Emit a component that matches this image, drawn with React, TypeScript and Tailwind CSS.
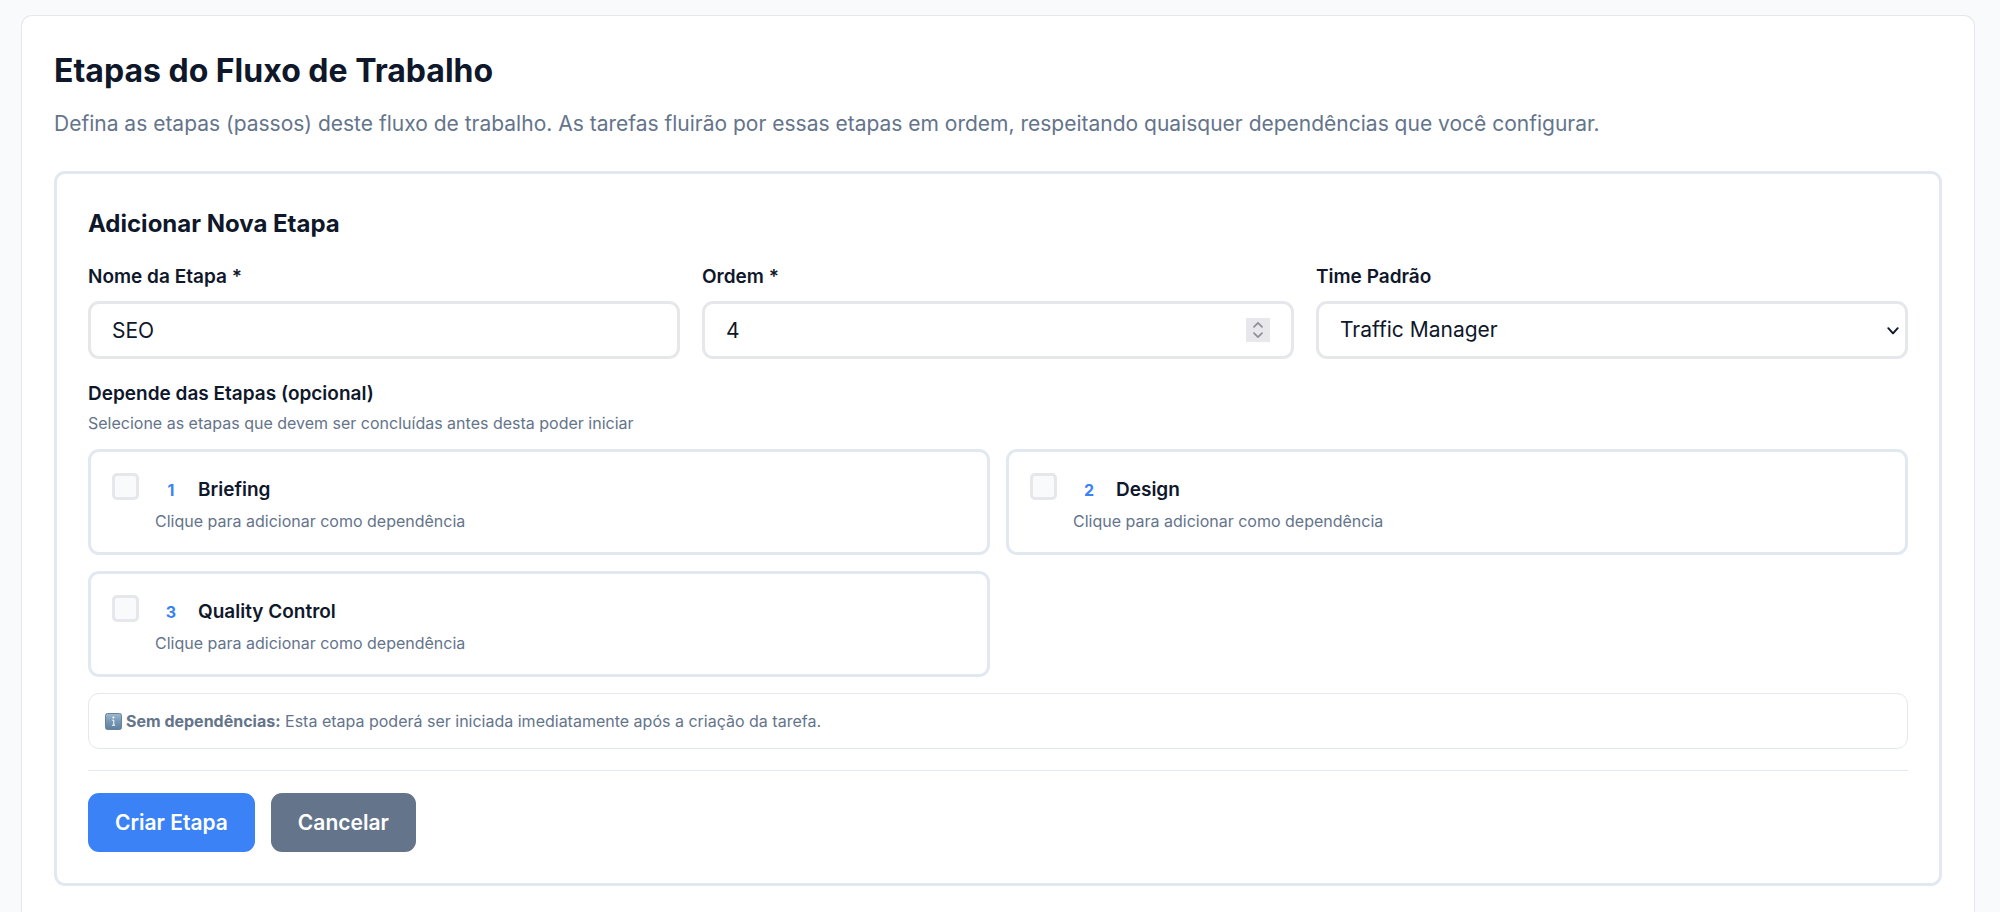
import { useState } from "react";
import type { ReactNode } from "react";

interface Step {
  id: number;
  name: string;
}

const STEPS: Step[] = [
  { id: 1, name: "Briefing" },
  { id: 2, name: "Design" },
  { id: 3, name: "Quality Control" },
];

const TEAMS = ["Traffic Manager", "Design", "Copywriting"];

const LABEL_CLASS = "block text-[19px] leading-[30px] font-semibold";
const FIELD_CLASS =
  "h-[58px] w-full rounded-[11px] border-3 border-gray-200 bg-white px-[21px] text-[21px] outline-none focus:border-[#3b82f6]";

function Field({ id, label, children }: { id: string; label: string; children: ReactNode }) {
  return (
    <div>
      <label className={LABEL_CLASS} htmlFor={id}>
        {label}
      </label>
      <div className="relative mt-[9px]">{children}</div>
    </div>
  );
}

function StepperIcon() {
  return (
    <svg
      aria-hidden="true"
      className="pointer-events-none absolute top-[17px] right-6 h-6 w-6"
      fill="none"
      viewBox="0 0 24 24"
    >
      <rect fill="#e8e8ec" height="24" width="24" />
      <path
        d="M8 8.8 12 4.8 16 8.8M8 15.2 12 19.2 16 15.2"
        stroke="#8e8d99"
        strokeLinecap="round"
        strokeLinejoin="round"
        strokeWidth="1.7"
      />
    </svg>
  );
}

function ChevronIcon() {
  return (
    <svg
      aria-hidden="true"
      className="pointer-events-none absolute top-[25px] right-[9px] h-[10px] w-3"
      fill="none"
      viewBox="0 0 12 10"
    >
      <path
        d="M1.3 2.2 6 7.4 10.7 2.2"
        stroke="#0f172a"
        strokeLinecap="round"
        strokeLinejoin="round"
        strokeWidth="1.9"
      />
    </svg>
  );
}

function InfoIcon() {
  return (
    <svg aria-hidden="true" className="h-[17px] w-[17px] shrink-0" viewBox="0 0 17 17">
      <defs>
        <linearGradient id="info-face" x1="0" x2="0" y1="0" y2="1">
          <stop offset="0" stopColor="#9dbad0" />
          <stop offset="0.5" stopColor="#7897b3" />
          <stop offset="1" stopColor="#5d7f9f" />
        </linearGradient>
      </defs>
      <rect fill="url(#info-face)" height="16" rx="2" stroke="#66839d" width="16" x="0.5" y="0.5" />
      <circle cx="8.4" cy="4.6" fill="#fff" r="1" />
      <path d="M7.2 7.2h1.6v4.8M6.9 12.2h3.3" fill="none" stroke="#fff" strokeWidth="1" />
    </svg>
  );
}

function DependencyOption({
  step,
  checked,
  onToggle,
}: {
  step: Step;
  checked: boolean;
  onToggle: () => void;
}) {
  return (
    <label className="flex cursor-pointer gap-4 rounded-[11px] border-3 border-slate-200 p-[21px]">
      <input
        checked={checked}
        className="h-[27px] w-[27px] shrink-0 appearance-none rounded-[5px] border-3 border-gray-200 bg-slate-50 checked:border-[#3b82f6] checked:bg-[#3b82f6]"
        onChange={onToggle}
        type="checkbox"
      />
      <span className="block">
        <span className="flex h-[34px] items-center gap-[11px]">
          <span className="flex w-8 justify-center text-[16px] font-bold text-[#3b82f6]">
            {step.id}
          </span>
          <span className="text-[19px] leading-[30px] font-semibold">{step.name}</span>
        </span>
        <span className="mt-1 block text-[16px] leading-[20px] text-[#64748b]">
          {checked ? "Dependência adicionada" : "Clique para adicionar como dependência"}
        </span>
      </span>
    </label>
  );
}

export default function App() {
  const [name, setName] = useState("SEO");
  const [order, setOrder] = useState("4");
  const [team, setTeam] = useState(TEAMS[0]);
  const [dependencies, setDependencies] = useState<number[]>([]);

  const toggle = (id: number) => {
    setDependencies((prev) =>
      prev.includes(id) ? prev.filter((d) => d !== id) : [...prev, id],
    );
  };

  return (
    <div className="flex min-h-screen flex-col bg-slate-50 pt-[15px] pr-[25px] pl-[21px] font-['Inter',sans-serif] text-slate-900">
      <main className="flex-1 rounded-t-[11px] border border-b-0 border-slate-200 bg-white px-8 pt-[33px] pb-[26px]">
        <h2 className="text-[32px] leading-[44px] font-bold">Etapas do Fluxo de Trabalho</h2>
        <p className="mt-[15px] text-[21px] leading-[32px] text-[#64748b]">
          Defina as etapas (passos) deste fluxo de trabalho. As tarefas fluirão por essas etapas em
          ordem, respeitando quaisquer dependências que você configurar.
        </p>

        <form
          className="mt-[31px] rounded-[11px] border-3 border-slate-200 px-[31px] pt-8 pb-[31px]"
          onSubmit={(e) => {
            e.preventDefault();
          }}
        >
          <h3 className="text-[24px] leading-[36px] font-bold">Adicionar Nova Etapa</h3>

          <div className="mt-5 grid grid-cols-3 gap-[22px]">
            <Field id="step-name" label="Nome da Etapa *">
              <input
                className={FIELD_CLASS}
                id="step-name"
                onChange={(e) => setName(e.target.value)}
                type="text"
                value={name}
              />
            </Field>
            <Field id="step-order" label="Ordem *">
              <input
                className={`${FIELD_CLASS} [appearance:textfield] [&::-webkit-inner-spin-button]:appearance-none`}
                id="step-order"
                onChange={(e) => setOrder(e.target.value)}
                type="number"
                value={order}
              />
              <StepperIcon />
            </Field>
            <Field id="step-team" label="Time Padrão">
              <select
                className={`${FIELD_CLASS} appearance-none`}
                id="step-team"
                onChange={(e) => setTeam(e.target.value)}
                value={team}
              >
                {TEAMS.map((t) => (
                  <option key={t}>{t}</option>
                ))}
              </select>
              <ChevronIcon />
            </Field>
          </div>

          <fieldset className="mt-5">
            <legend className={LABEL_CLASS}>Depende das Etapas (opcional)</legend>
            <p className="mt-[2px] text-[16px] leading-[24px] text-[#64748b]">
              Selecione as etapas que devem ser concluídas antes desta poder iniciar
            </p>
            <div className="mt-[14px] grid grid-cols-2 gap-4">
              {STEPS.map((step) => (
                <DependencyOption
                  checked={dependencies.includes(step.id)}
                  key={step.id}
                  onToggle={() => toggle(step.id)}
                  step={step}
                />
              ))}
            </div>
          </fieldset>

          <div className="mt-4 flex items-center gap-1 rounded-[11px] border border-slate-200 px-4 py-[15px] text-[16px] leading-[24px] text-[#64748b]">
            <InfoIcon />
            <p>
              <strong className="font-bold">Sem dependências:</strong> Esta etapa poderá ser
              iniciada imediatamente após a criação da tarefa.
            </p>
          </div>

          <div className="mt-[21px] flex gap-4 border-t border-slate-200 pt-[22px] text-[21px] font-semibold text-white">
            <button className="h-[59px] rounded-[11px] bg-[#3b82f6] px-[27px]" type="submit">
              Criar Etapa
            </button>
            <button className="h-[59px] rounded-[11px] bg-[#64748b] px-[27px]" type="button">
              Cancelar
            </button>
          </div>
        </form>
      </main>
    </div>
  );
}
